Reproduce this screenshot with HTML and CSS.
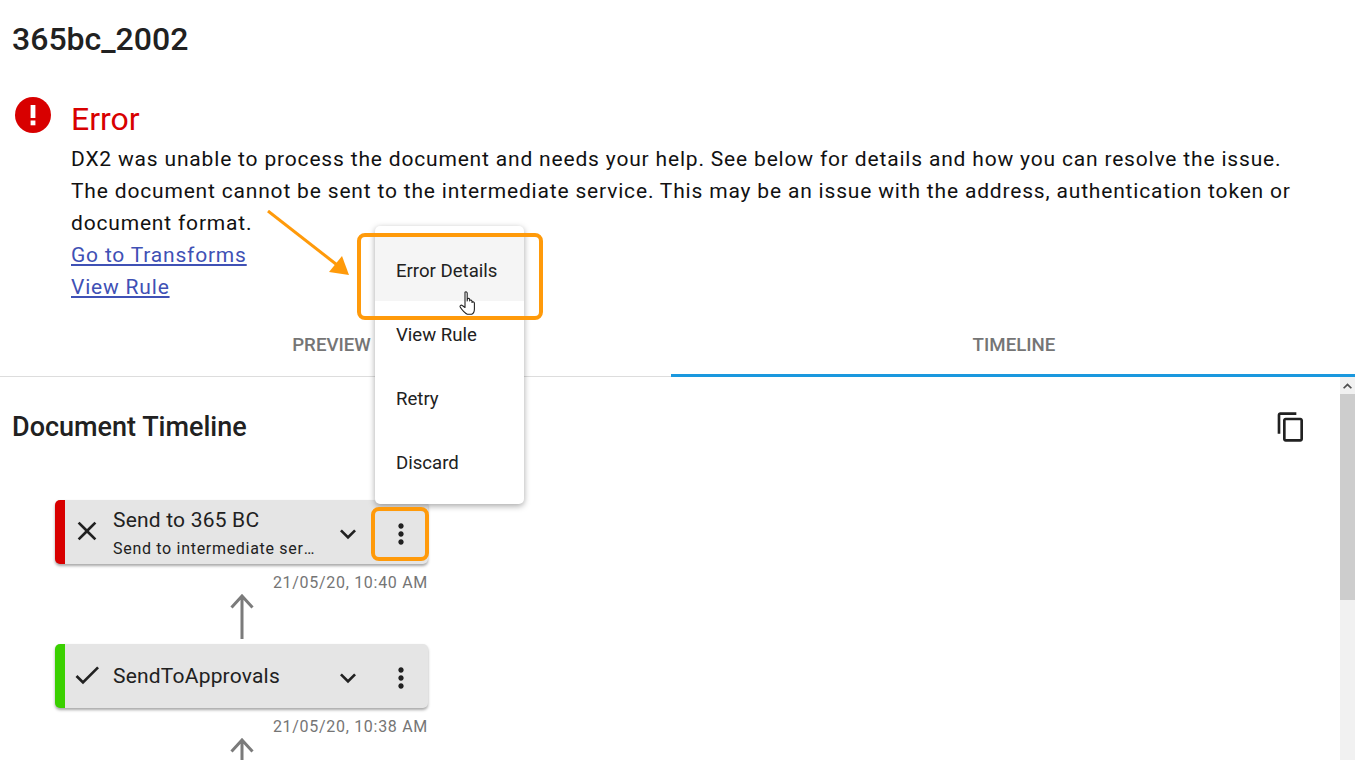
FILE: index.html
```html
<!DOCTYPE html>
<html lang="en">
<head>
<meta charset="utf-8">
<title>365bc_2002</title>
<link rel="stylesheet" href="styles.css">
</head>
<body>
<main class="page">
  <h1 class="title">365bc_2002</h1>
  <section class="error">
    <svg class="error-icon" viewBox="0 0 36 36"><circle cx="18" cy="18" r="18" fill="#d80000"/><rect x="15.6" y="8" width="4.8" height="13" fill="#fff"/><rect x="15.6" y="23.5" width="4.8" height="4.8" fill="#fff"/></svg>
    <div class="error-body">
      <h2 class="error-title">Error</h2>
      <p class="error-text">DX2 was unable to process the document and needs your help. See below for details and how you can resolve the issue.</p>
      <p class="error-text">The document cannot be sent to the intermediate service. This may be an issue with the address, authentication token or document format.</p>
      <a class="error-link" href="#">Go to Transforms</a>
      <a class="error-link" href="#">View Rule</a>
    </div>
  </section>
  <nav class="tabs">
    <div class="tab">PREVIEW</div>
    <div class="tab tab-active">TIMELINE</div>
  </nav>
  <section class="content">
    <div class="timeline">
      <div class="timeline-head">
        <h3 class="timeline-title">Document Timeline</h3>
        <svg class="copy-icon" viewBox="0 0 24 24"><path fill="#212121" d="M16 1H4c-1.100 0-2 .9-2 2v14h2V3h12V1zm3 4H8c-1.100 0-2 .9-2 2v14c0 1.100.9 2 2 2h11c1.100 0 2-.9 2-2V7c0-1.100-.9-2-2-2zm0 16H8V7h11v14z"/></svg>
      </div>
      <div class="step-list">
        <div class="step">
          <div class="card card-error">
            <svg class="status" viewBox="0 0 24 24"><path fill="#212121" d="M19 6.410 17.590 5 12 10.590 6.410 5 5 6.410 10.590 12 5 17.590 6.410 19 12 13.410 17.590 19 19 17.590 13.410 12z"/></svg>
            <div class="card-text">
              <div class="card-name">Send to 365 BC</div>
              <div class="card-sub">Send to intermediate service</div>
            </div>
            <svg class="chev" viewBox="0 0 24 24"><path fill="#212121" d="M7.410 8.590 12 13.170l4.590-4.580L18 10l-6 6-6-6z"/></svg>
            <svg class="more" viewBox="0 0 24 24"><path fill="#212121" d="M12 8c1.100 0 2-.9 2-2s-.9-2-2-2-2 .9-2 2 .9 2 2 2zm0 2c-1.100 0-2 .9-2 2s.9 2 2 2 2-.9 2-2-.9-2-2-2zm0 6c-1.100 0-2 .9-2 2s.9 2 2 2 2-.9 2-2-.9-2-2-2z"/></svg>
          </div>
          <div class="stamp">21/05/20, 10:40 AM</div>
        </div>
        <svg class="up" viewBox="0 0 24 46"><path fill="none" stroke="#7b7b7b" stroke-width="3" d="M12 45V2M1.500 13.500 12 2l10.500 11.500"/></svg>
        <div class="step">
          <div class="card card-ok">
            <svg class="status" viewBox="0 0 24 24"><path fill="#212121" d="M9 16.170 4.830 12l-1.420 1.410L9 19 21 7l-1.410-1.410z"/></svg>
            <div class="card-text card-text-single">
              <div class="card-name">SendToApprovals</div>
            </div>
            <svg class="chev" viewBox="0 0 24 24"><path fill="#212121" d="M7.410 8.590 12 13.170l4.590-4.580L18 10l-6 6-6-6z"/></svg>
            <svg class="more" viewBox="0 0 24 24"><path fill="#212121" d="M12 8c1.100 0 2-.9 2-2s-.9-2-2-2-2 .9-2 2 .9 2 2 2zm0 2c-1.100 0-2 .9-2 2s.9 2 2 2 2-.9 2-2-.9-2-2-2zm0 6c-1.100 0-2 .9-2 2s.9 2 2 2 2-.9 2-2-.9-2-2-2z"/></svg>
          </div>
          <div class="stamp">21/05/20, 10:38 AM</div>
        </div>
        <svg class="up" viewBox="0 0 24 46"><path fill="none" stroke="#7b7b7b" stroke-width="3" d="M12 45V2M1.500 13.500 12 2l10.500 11.500"/></svg>
      </div>
    </div>
    <div class="scrollbar">
      <div class="scroll-btn"><svg viewBox="0 0 10 6" class="scroll-arrow"><path fill="#505050" d="M5 0 10 5 8.600 6 5 2.600 1.400 6 0 5z"/></svg></div>
      <div class="scroll-thumb"></div>
    </div>
  </section>
</main>
<div class="menu">
  <div class="menu-item menu-item-hover">Error Details</div>
  <div class="menu-item">View Rule</div>
  <div class="menu-item">Retry</div>
  <div class="menu-item">Discard</div>
</div>
<div class="mark mark-menu"></div>
<div class="mark mark-more"></div>
<svg class="arrow" viewBox="0 0 90 70"><path fill="none" stroke="#ff9a0a" stroke-width="3" d="M1 1 74 58"/><path fill="#ff9a0a" d="M82 65 62 62 75 46z"/></svg>
<svg class="cursor" viewBox="0 0 18 24"><path fill="#fff" stroke="#222" stroke-width="1.100" stroke-linejoin="round" d="M6 1.200c1-.8 2.200-.3 2.200 1V10l.3-2.300c1.400-.7 2.200 0 2.200 1.200v1l.2-.6c1.200-.6 2.100 0 2.100 1.200v1l.2-.4c1.100-.5 2.200.1 2.200 1.200V18c0 2.500-1.200 4.600-2.700 5.200H8.300C6.500 22.500 2.500 18.500 1.200 16c-.6-1.300.9-2.500 2.100-1.500L6 16.500z"/></svg>
</body>
</html>
```
FILE: styles.css
```css
* { box-sizing: border-box; }
html, body { margin: 0; height: 100%; overflow: hidden; background: #fff; }
body { font-family: Roboto, "Liberation Sans", sans-serif; color: #212121; }
.page { display: flex; flex-direction: column; height: 760px; }
.title { margin: 0; padding: 20px 12px 0; font-size: 32px; line-height: 38px; font-weight: 500; height: 94px; }
.error { display: flex; padding: 0 0 0 15px; height: 218px; }
.error-icon { width: 36px; height: 36px; margin-top: 3px; flex: none; }
.error-body { margin-left: 20px; width: 1240px; }
.error-title { margin: 0; padding-top: 2px; font-size: 32px; line-height: 47px; font-weight: 400; color: #d80000; }
.error-text { margin: 0; font-size: 21px; line-height: 32px; letter-spacing: .82px; color: #111; }
.error-link { display: block; width: max-content; font-size: 21px; line-height: 32px; letter-spacing: .8px; color: #3f51b5; text-decoration: underline; }
.tabs { display: grid; grid-template-columns: 671px 1fr; height: 65px; border-bottom: 1px solid #ddd; flex: none; }
.tab { display: flex; align-items: center; justify-content: center; font-size: 18.7px; font-weight: 500; color: #757575; padding: 2px 8px 0 0; }
.tab-active { border-bottom: 3px solid #1a98de; margin-bottom: -1px; padding: 3px 0 0 2px; }
.content { flex: 1; display: flex; min-height: 0; overflow: hidden; }
.timeline { flex: 1; padding: 0 33px 0 12px; min-width: 0; }
.timeline-head { display: flex; justify-content: space-between; align-items: center; height: 100px; }
.timeline-title { margin: 0; font-size: 27px; font-weight: 500; color: #212121; }
.copy-icon { width: 32px; height: 32px; margin-top: 0; }
.step-list { display: flex; flex-direction: column; align-items: center; width: 373px; margin: 23px 0 0 43px; }
.step { width: 100%; }
.card { display: flex; align-items: center; height: 64px; border-radius: 5px; background: #e5e5e5; box-shadow: 0 2px 3px rgba(0,0,0,.35); border-left: 10px solid; padding-left: 6px; }
.card-error { border-left-color: #d80000; }
.card-ok { border-left-color: #3ad000; }
.status { width: 32px; height: 32px; flex: none; margin-top: -2px; }
.card-text { flex: 1; min-width: 0; margin-left: 10px; padding-top: 5px; }
.card-text-single { padding-top: 0; }
.card-name { font-size: 21px; line-height: 28px; letter-spacing: .2px; }
.card-sub { font-size: 16px; line-height: 29px; letter-spacing: .7px; width: 203px; white-space: nowrap; overflow: hidden; text-overflow: ellipsis; }
.chev { width: 32px; height: 32px; flex: none; margin: 4px 21px 0 0; }
.more { width: 32px; height: 32px; flex: none; margin: 4px 11px 0 0; }
.stamp { text-align: right; font-size: 16px; line-height: 20px; letter-spacing: .7px; color: #757575; padding: 9px 0 0 0; height: 30px; }
.up { width: 24px; height: 46px; margin: 0 0 4px 0; flex: none; }
.scrollbar { width: 15px; background: #f1f1f1; flex: none; }
.scroll-btn { height: 17px; display: flex; align-items: center; justify-content: center; }
.scroll-arrow { width: 9px; height: 6px; }
.scroll-thumb { height: 206px; background: #cdcdcd; }
.menu { position: absolute; left: 375px; top: 226px; width: 149px; height: 278px; padding: 11px 0; background: #fff; border-radius: 5px; box-shadow: 0 2px 6px rgba(0,0,0,.35); }
.menu-item { height: 64px; padding: 4px 0 0 21px; display: flex; align-items: center; font-size: 18.6px; color: #212121; }
.menu-item-hover { background: #f5f5f5; }
.mark { position: absolute; border: 4px solid #ff9a0a; border-radius: 8px; }
.mark-menu { left: 357px; top: 233px; width: 186px; height: 87px; }
.mark-more { left: 371px; top: 507px; width: 58px; height: 54px; }
.arrow { position: absolute; left: 267px; top: 210px; width: 90px; height: 70px; }
.cursor { position: absolute; left: 459px; top: 291px; width: 18px; height: 24px; }
```
